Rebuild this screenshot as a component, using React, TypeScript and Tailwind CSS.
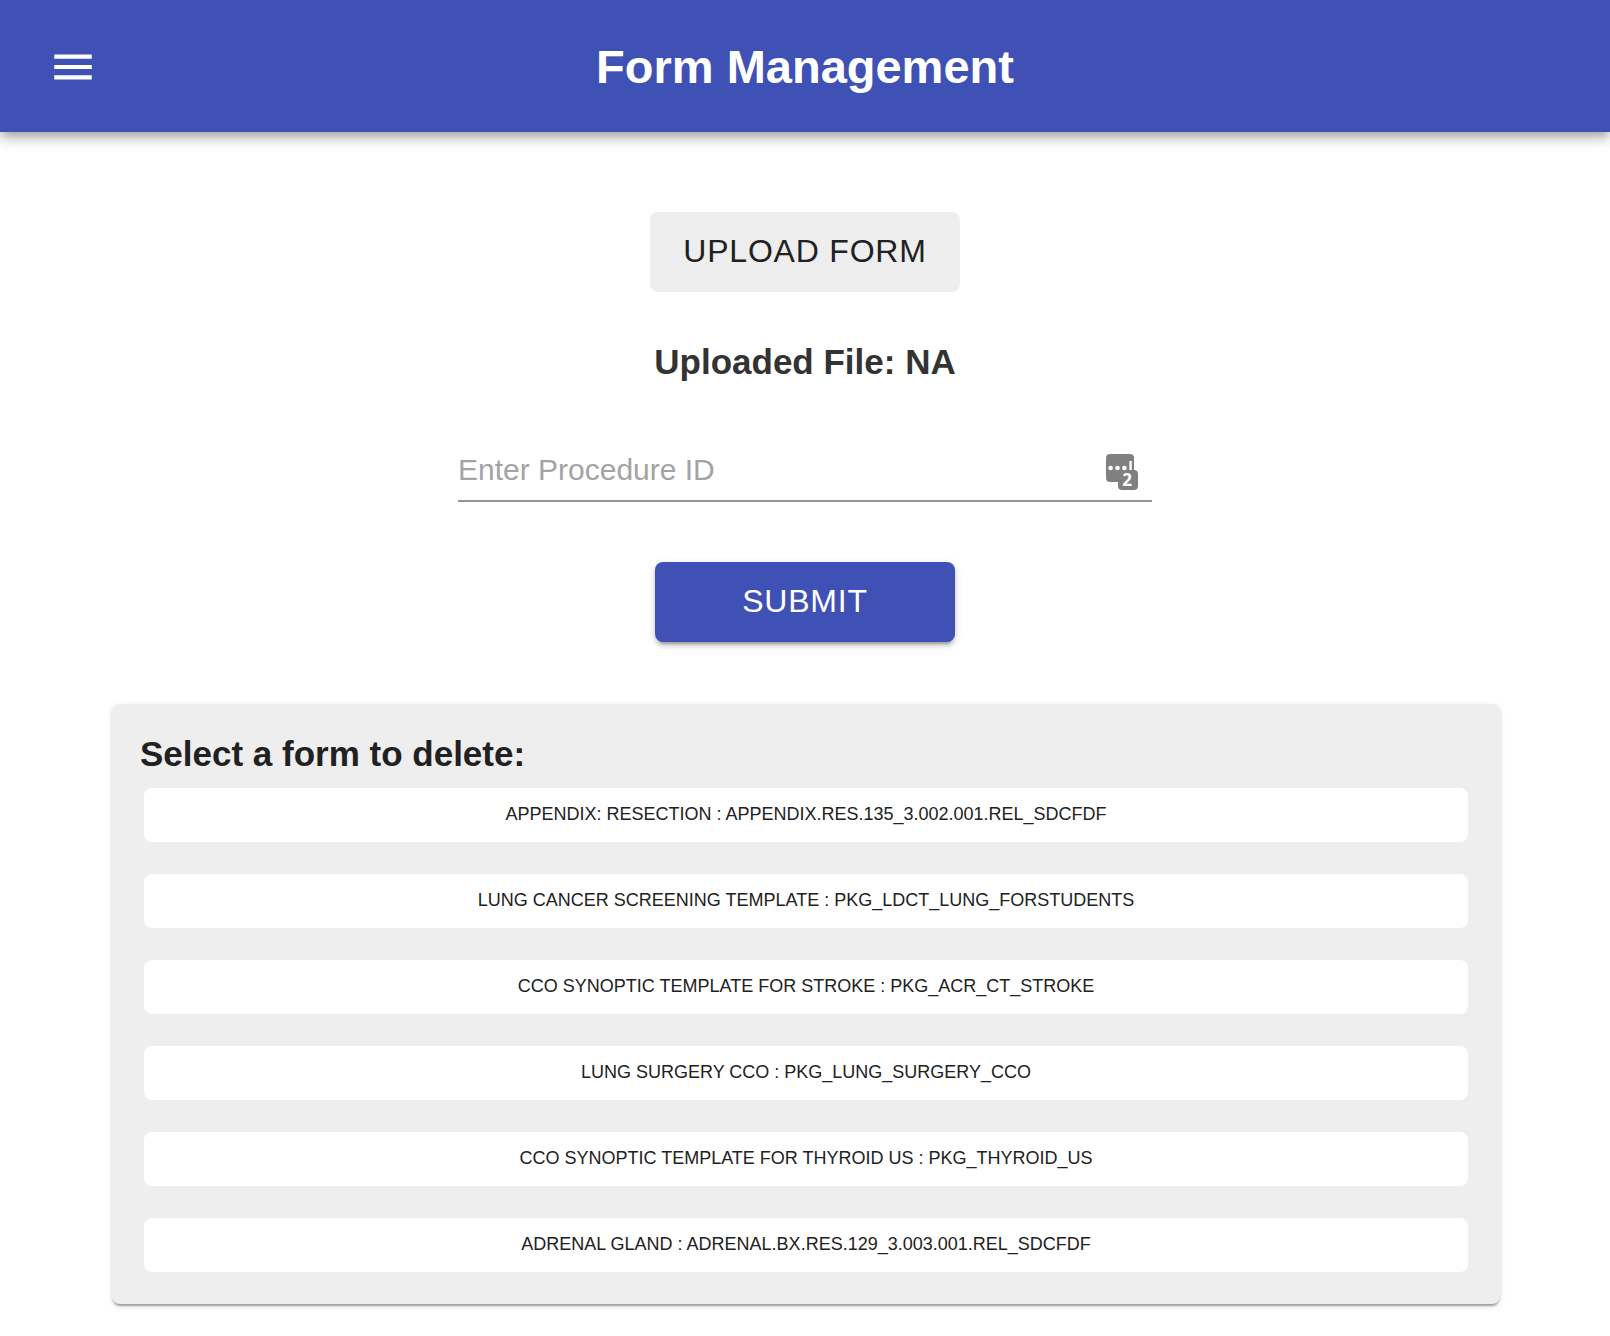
import { useState } from "react";

const forms = [
  "APPENDIX: RESECTION : APPENDIX.RES.135_3.002.001.REL_SDCFDF",
  "LUNG CANCER SCREENING TEMPLATE : PKG_LDCT_LUNG_FORSTUDENTS",
  "CCO SYNOPTIC TEMPLATE FOR STROKE : PKG_ACR_CT_STROKE",
  "LUNG SURGERY CCO : PKG_LUNG_SURGERY_CCO",
  "CCO SYNOPTIC TEMPLATE FOR THYROID US : PKG_THYROID_US",
  "ADRENAL GLAND : ADRENAL.BX.RES.129_3.003.001.REL_SDCFDF",
];

function MenuIcon() {
  return (
    <svg className="size-[50px]" viewBox="0 0 24 24" fill="currentColor" aria-hidden="true">
      <path d="M3 18h18v-2H3v2zm0-5h18v-2H3v2zm0-7v2h18V6H3z" />
    </svg>
  );
}

function PasswordManagerIcon() {
  return (
    <svg className="h-9 w-8" viewBox="0 0 32 36" aria-hidden="true">
      <rect width="28" height="28" rx="4" fill="#808080" />
      <rect x="12" y="16" width="20" height="20" rx="4" fill="#808080" />
      <g fill="#fff">
        <circle cx="4.6" cy="14" r="2.3" />
        <circle cx="11.5" cy="14" r="2.3" />
        <circle cx="18.4" cy="14" r="2.3" />
        <rect x="23.4" y="7" width="2.4" height="9" />
      </g>
      <text
        x="21"
        y="32"
        textAnchor="middle"
        fill="#fff"
        className="font-['Open_Sans',sans-serif] text-[17px] font-bold"
      >
        2
      </text>
    </svg>
  );
}

export default function App() {
  const [procedureId, setProcedureId] = useState("");

  return (
    <div className="min-h-screen bg-white pb-8 font-['Liberation_Sans',Arial,sans-serif] text-[#212121]">
      <header className="grid h-33 grid-cols-[1fr_auto_1fr] items-center bg-[#3f51b5] px-12 pt-0.5 text-white shadow-[0_4px_8px_-2px_rgba(0,0,0,0.2),0_8px_10px_0_rgba(0,0,0,0.14),0_2px_20px_0_rgba(0,0,0,0.12)]">
        <button type="button" aria-label="Open menu" className="justify-self-start">
          <MenuIcon />
        </button>
        <h1 className="text-[47px] leading-14 font-bold">Form Management</h1>
      </header>

      <main>
        <form
          className="flex flex-col items-center px-8 pt-20"
          onSubmit={(event) => event.preventDefault()}
        >
          <button
            type="button"
            className="h-20 rounded-lg bg-[#eeeeee] px-[33px] pb-0.5 text-[32px] tracking-wide"
          >
            UPLOAD FORM
          </button>
          <h2 className="mt-12 text-[35px] leading-11 font-bold text-[#333333]">Uploaded File: NA</h2>
          <div className="mt-15 flex h-[58px] w-full max-w-[694px] items-center border-b-2 border-[#949494] pr-3.5">
            <input
              type="text"
              aria-label="Procedure ID"
              placeholder="Enter Procedure ID"
              value={procedureId}
              onChange={(event) => setProcedureId(event.target.value)}
              className="h-full min-w-0 flex-1 pb-1 text-[30px] outline-none placeholder:text-[#a3a3a3]"
            />
            <PasswordManagerIcon />
          </div>
          <button
            type="submit"
            className="mt-15 h-20 w-75 rounded-lg bg-[#3f51b5] pb-0.5 text-[32px] tracking-wide text-white shadow-[0_6px_2px_-4px_rgba(0,0,0,0.2),0_4px_4px_0_rgba(0,0,0,0.14),0_2px_10px_0_rgba(0,0,0,0.12)]"
          >
            SUBMIT
          </button>
        </form>

        <section
          aria-labelledby="delete-heading"
          className="mt-15.5 mr-[110px] ml-28 rounded-lg bg-[#eeeeee] pt-7 pb-8 shadow-[0_4px_2px_-2px_rgba(0,0,0,0.2),0_2px_2px_0_rgba(0,0,0,0.14),0_2px_6px_0_rgba(0,0,0,0.12)]"
        >
          <h2 id="delete-heading" className="px-7 text-[35px] leading-11 font-bold">
            Select a form to delete:
          </h2>
          <ul className="mt-3 flex flex-col gap-8 px-8">
            {forms.map((name) => (
              <li key={name}>
                <button
                  type="button"
                  className="min-h-[54px] w-full rounded-lg bg-white pb-0.5 text-lg"
                >
                  {name}
                </button>
              </li>
            ))}
          </ul>
        </section>
      </main>
    </div>
  );
}
